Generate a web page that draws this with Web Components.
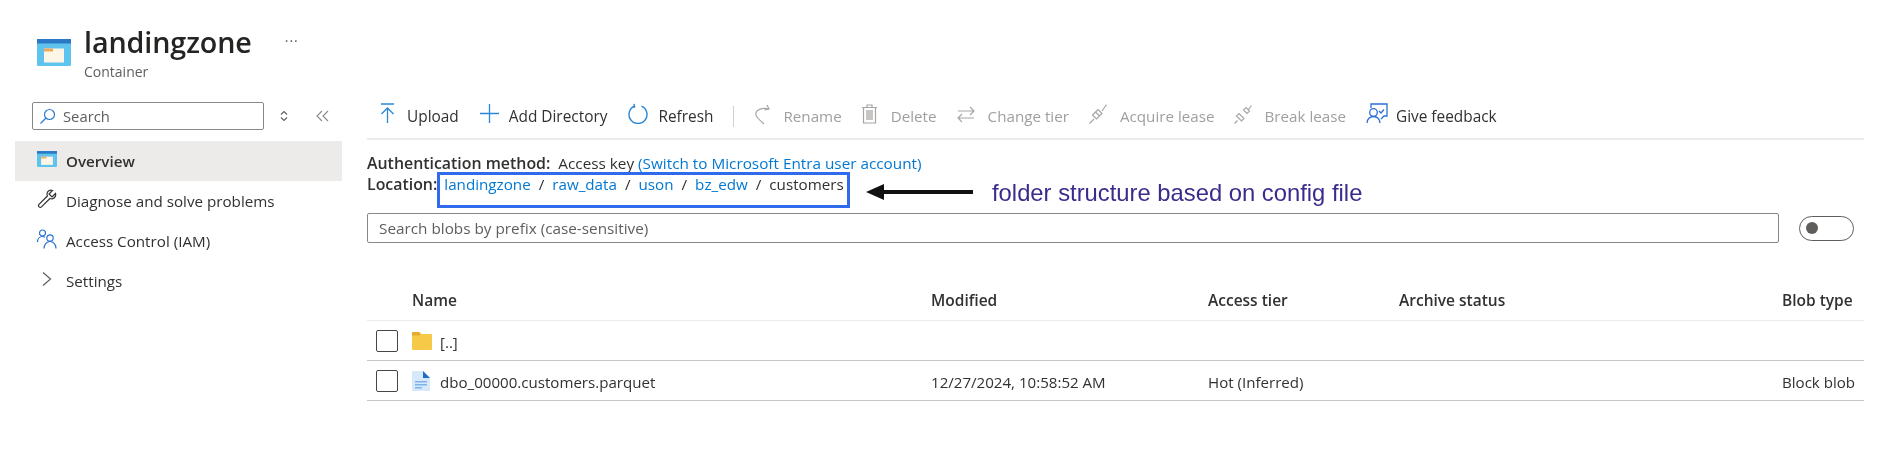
<!DOCTYPE html>
<html>
<head>
<meta charset="utf-8">
<title>landingzone</title>
<style>
  html, body { margin: 0; background: #fff; }
  body { font-family: "Open Sans", "Noto Sans", sans-serif; color: #323130; }
</style>
</head>
<body>
<blob-page></blob-page>

<script>
const ICONS = {
  container: (w, h) => `<svg width="${w}" height="${h}" viewBox="0 0 34 27"><rect x="0" y="0" width="34" height="27" rx="1.5" fill="#5ec4ee"/><rect x="0" y="0" width="34" height="4.5" fill="#2a78c6"/><rect x="7" y="9.5" width="20" height="14" fill="#fdf6e6"/><rect x="7" y="9.5" width="9" height="3" fill="#f0a95b"/></svg>`,
  search: `<svg width="17" height="17" viewBox="0 0 17 17" fill="none" stroke="#2b7cd3" stroke-width="1.2"><circle cx="10.5" cy="6.5" r="5"/><path d="M7 10 1.5 15.5"/></svg>`,
  updown: `<svg width="10" height="12" viewBox="0 0 10 12" fill="none" stroke="#605e5c" stroke-width="1.1"><path d="M2 4.500 5 1.500 8 4.500M2 7.500 5 10.500 8 7.500"/></svg>`,
  collapse: `<svg width="13" height="12" viewBox="0 0 13 12" fill="none" stroke="#8a8886" stroke-width="1.1"><path d="M6 1 1 6l5 5M12 1 7 6l5 5"/></svg>`,
  wrench: `<svg width="20" height="20" viewBox="0 0 20 20" fill="none" stroke="#323130" stroke-width="1.2"><path d="M18.5 4.5 15 8l-3-3 3.5-3.5C13 .6 10 2 10 5c0 .9.2 1.5.4 2L2 15.4c-1.6 1.7.9 4 2.5 2.500l8.400-8.400c3.300 1.300 6.600-1.500 5.600-5z"/></svg>`,
  people: `<svg width="20" height="20" viewBox="0 0 20 20" fill="none" stroke="#2b6fd6" stroke-width="1.2"><circle cx="5.500" cy="4" r="3"/><path d="M.5 13c0-3 2-5.500 5-5.500 1 0 1.800.3 2.500.7"/><circle cx="13" cy="9" r="3.200"/><path d="M7 19.500c0-3.500 2.500-7 6-7s6 3.500 6 7"/></svg>`,
  chevron: `<svg width="12" height="16" viewBox="0 0 12 16" fill="none" stroke="#605e5c" stroke-width="1.200"><path d="M2 1.500 9.500 8 2 14.500"/></svg>`,
  upload: `<svg width="15" height="21" viewBox="0 0 15 21" fill="none" stroke="#2b88d8" stroke-width="1.300"><path d="M1 1h13M7.500 20V5.500M1.500 11l6-6 6 6"/></svg>`,
  plus: `<svg width="19" height="19" viewBox="0 0 19 19" fill="none" stroke="#2b88d8" stroke-width="1.300"><path d="M9.500 0v19M0 9.500h19"/></svg>`,
  refresh: `<svg width="20" height="21" viewBox="0 0 20 21" fill="none" stroke="#2b88d8" stroke-width="1.400"><path d="M13.500 3.200a9 9 0 1 1-7 0M6 .8l.6 3.200-3.200.6"/></svg>`,
  rename: `<svg width="17" height="21" viewBox="0 0 17 21" fill="none" stroke="#a8a6a4" stroke-width="1.200"><path d="M13 1l2 4-4.500 1M15 5C8 3 1 6 2 11c.5 3 4 5 8 9"/></svg>`,
  trash: `<svg width="15" height="20" viewBox="0 0 15 20" fill="none" stroke="#a8a6a4" stroke-width="1.200"><path d="M0 3.500h15M5 3.500V1h5v2.500M1.500 3.500V19h12V3.500"/><rect x="4" y="6" width="7" height="10" fill="#c8c6c4" stroke="none"/></svg>`,
  swap: `<svg width="18" height="17" viewBox="0 0 18 17" fill="none" stroke="#a8a6a4" stroke-width="1.200"><path d="M1 5h16M13 1l4 4-4 4M17 12H1M5 8l-4 4 4 4"/></svg>`,
  lease: `<svg width="18" height="20" viewBox="0 0 18 20" fill="none" stroke="#a8a6a4" stroke-width="1.200"><path d="M.5 19.500 5 15M13 7l4.500-6.500M3.500 11 9 5.500l4 4L7.500 15z"/><path d="M6.500 8l4 4"/></svg>`,
  breaklease: `<svg width="18" height="20" viewBox="0 0 18 20" fill="none" stroke="#a8a6a4" stroke-width="1.200"><path d="M.5 19.500 3.500 16.500M14.500 5.500l3-4M2.500 12l5 5 2.500-2.500-5-5zM9.500 6l3.500 3.500 2.500-2.500L12 3.500z"/></svg>`,
  feedback: `<svg width="22" height="21" viewBox="0 0 22 21" fill="none" stroke="#2b6fd6" stroke-width="1.300"><path d="M5 5V1h16v12h-3l-3 3"/><circle cx="7.500" cy="9.500" r="3.800"/><path d="M1 20c0-4 3-6.500 6.500-6.500S14 16 14 20M13 8l2 2 3-3.500"/></svg>`,
  folder: `<svg width="20" height="18" viewBox="0 0 20 18"><path d="M0 1.200C0 .5.500 0 1.200 0H7l2 2h10c.6 0 1 .4 1 1v14c0 .6-.4 1-1 1H1c-.6 0-1-.4-1-1z" fill="#f7c948"/><path d="M0 1.200C0 .5.500 0 1.200 0H7l2 2-2 1.500H0z" fill="#e6ac32"/></svg>`,
  file: `<svg width="18" height="20" viewBox="0 0 18 20"><path d="M0 1a1 1 0 0 1 1-1h10l7 7v12a1 1 0 0 1-1 1H1a1 1 0 0 1-1-1z" fill="#d6e8fa"/><path d="M11 0l7 7h-7z" fill="#1f6fc4"/><rect x="3" y="10" width="12" height="1.500" fill="#7fb2e8"/><rect x="3" y="13" width="12" height="1.500" fill="#7fb2e8"/><rect x="3" y="16" width="7" height="1.500" fill="#7fb2e8"/></svg>`
};

class PageHeader extends HTMLElement {
  constructor() {
    super();
    this.attachShadow({ mode: 'open' });
    this.shadowRoot.innerHTML = `
      <style>
        :host { display: flex; align-items: flex-start; height: 94px; padding-left: 37px; box-sizing: border-box; padding-top: 21px; }
        .icon { margin-top: 18px; margin-right: 13px; display: flex; }
        .name { font-size: 28.700px; font-weight: 600; line-height: 42px; color: #252423; letter-spacing: -.1px; }
        .sub { font-size: 14px; line-height: 18px; color: #605e5c; }
        .more { margin-left: 33px; margin-top: 13px; font-size: 14px; line-height: 14px; color: #605e5c; letter-spacing: 1px; }
      </style>
      <div class="icon">${ICONS.container(34, 27)}</div>
      <div><div class="name">${this.getAttribute('name')}</div><div class="sub">${this.getAttribute('kind')}</div></div>
      <div class="more">···</div>
    `;
  }
}
customElements.define('page-header', PageHeader);

class SideItem extends HTMLElement {
  constructor() {
    super();
    this.attachShadow({ mode: 'open' });
    this.shadowRoot.innerHTML = `
      <style>
        :host { display: flex; align-items: center; height: 40px; padding-left: 22px; font-size: 15.200px; color: #323130; }
        :host([active]) { background: #edebe9; font-weight: 600; }
        .icon { width: 20px; margin-right: 9px; display: flex; justify-content: center; }
      </style>
      <div class="icon"><slot name="icon"></slot></div><slot></slot>
    `;
  }
}
customElements.define('side-item', SideItem);

class SideNav extends HTMLElement {
  constructor() {
    super();
    this.attachShadow({ mode: 'open' });
    this.shadowRoot.innerHTML = `
      <style>
        :host { display: block; width: 327px; margin-left: 15px; padding-top: 8px; flex: none; }
        .top { display: flex; align-items: center; margin: 0 0 11px 17px; }
        .box { width: 232px; height: 28px; box-sizing: border-box; border: 1px solid #8a8886; border-radius: 2px; display: flex; align-items: center; padding-left: 6px; gap: 7px; font-size: 14.800px; color: #605e5c; }
        .ud { margin-left: 15px; display: flex; }
        .col { margin-left: 27px; display: flex; }
      </style>
      <div class="top">
        <div class="box">${ICONS.search}<span>Search</span></div>
        <div class="ud">${ICONS.updown}</div>
        <div class="col">${ICONS.collapse}</div>
      </div>
      <slot></slot>
    `;
  }
}
customElements.define('side-nav', SideNav);

class ToolButton extends HTMLElement {
  constructor() {
    super();
    this.attachShadow({ mode: 'open' });
    this.shadowRoot.innerHTML = `
      <style>
        :host { display: flex; align-items: center; font-size: 15.400px; color: #323130; white-space: nowrap; }
        :host([disabled]) { color: #a19f9d; font-size: 15.200px; }
        .icon { display: flex; margin-right: var(--icon-gap, 12px); }
      </style>
      <div class="icon"><slot name="icon"></slot></div><slot></slot>
    `;
  }
}
customElements.define('tool-button', ToolButton);

class CommandBar extends HTMLElement {
  constructor() {
    super();
    this.attachShadow({ mode: 'open' });
    this.shadowRoot.innerHTML = `
      <style>
        :host { display: flex; align-items: center; height: 46px; box-sizing: border-box; border-bottom: 2px solid #edebe9; padding-left: 13px; gap: 20px; }
        ::slotted(.wide) { margin-left: 1px; }
      </style>
      <slot></slot>
    `;
  }
}
customElements.define('command-bar', CommandBar);

class BlobPath extends HTMLElement {
  constructor() {
    super();
    this.attachShadow({ mode: 'open' });
    const crumbs = ['landingzone', 'raw_data', 'uson', 'bz_edw'];
    this.shadowRoot.innerHTML = `
      <style>
        :host { display: block; position: relative; font-size: 15.300px; line-height: 21px; padding-top: 13px; color: #323130; }
        b { font-weight: 600; font-size: 15.900px; }
        a { color: #0078d4; text-decoration: none; }
        .auth { white-space: nowrap; }
        .auth span { margin-left: 4px; }
        .loc { display: flex; white-space: nowrap; }
        .crumbs { display: flex; margin-left: 7px; gap: 8px; font-size: 15.200px; }
        .mark { position: absolute; left: 70px; top: 32px; width: 413px; height: 36px; box-sizing: border-box; border: 3px solid #2f6bea; }
        .arrow { position: absolute; left: 499px; top: 43px; }
        .note { position: absolute; left: 625px; top: 40px; font-family: "Liberation Sans", Arial, sans-serif; font-size: 23.800px; line-height: 26px; color: #3a2b8c; white-space: nowrap; }
      </style>
      <div class="auth"><b>Authentication method:</b> <span>Access key</span> <a href="#">(Switch to Microsoft Entra user account)</a></div>
      <div class="loc"><b>Location:</b><div class="crumbs">
        ${crumbs.map(c => `<a href="#">${c}</a><span>/</span>`).join('')}<span>customers</span>
      </div></div>
      <div class="mark"></div>
      <svg class="arrow" width="108" height="18" viewBox="0 0 108 18"><path d="M0 9 18 1v6h89v4H18v6z" fill="#111"/></svg>
      <div class="note">folder structure based on config file</div>
    `;
  }
}
customElements.define('blob-path', BlobPath);

class PrefixSearch extends HTMLElement {
  constructor() {
    super();
    this.attachShadow({ mode: 'open' });
    this.shadowRoot.innerHTML = `
      <style>
        :host { display: flex; align-items: center; margin-top: 18px; }
        .input { width: 1412px; height: 30px; box-sizing: border-box; border: 1px solid #8a8886; border-radius: 2px; padding-left: 11px; font-size: 15.300px; line-height: 28px; color: #605e5c; }
        .toggle { margin-left: 20px; width: 55px; height: 25px; box-sizing: border-box; border: 1px solid #605e5c; border-radius: 13px; display: flex; align-items: center; padding-left: 6px; }
        .toggle i { width: 12px; height: 12px; border-radius: 50%; background: #605e5c; }
      </style>
      <div class="input">${this.getAttribute('placeholder')}</div>
      <div class="toggle"><i></i></div>
    `;
  }
}
customElements.define('prefix-search', PrefixSearch);

class BlobRow extends HTMLElement {
  constructor() {
    super();
    this.attachShadow({ mode: 'open' });
    this.shadowRoot.innerHTML = `
      <style>
        :host { display: grid; grid-template-columns: 45px 519px 277px 191px 383px 82px; align-items: center; height: 40px; box-sizing: border-box; border-bottom: 1px solid #c8c6c4; font-size: 15.100px; color: #323130; white-space: nowrap; }
        :host([head]) { font-size: 15.500px; font-weight: 600; border-bottom-color: #edebe9; height: 39px; padding-bottom: 2px; }
        :host(:not([head])) .cell { padding-top: 2px; }
        .check { width: 22px; height: 22px; box-sizing: border-box; border: 1.500px solid #484644; border-radius: 2px; margin-left: 9px; }
        .name { display: flex; align-items: center; }
        .icon { width: 28px; display: flex; }
      </style>
      <div>${this.hasAttribute('head') ? '' : '<div class="check"></div>'}</div>
      <div class="name">${ICONS[this.getAttribute('icon')] ? `<div class="icon">${ICONS[this.getAttribute('icon')]}</div>` : ''}<div class="cell"><slot name="name"></slot></div></div>
      <div class="cell"><slot name="modified"></slot></div>
      <div class="cell"><slot name="tier"></slot></div>
      <div class="cell"><slot name="archive"></slot></div>
      <div class="cell"><slot name="type"></slot></div>
    `;
  }
}
customElements.define('blob-row', BlobRow);

class BlobPage extends HTMLElement {
  constructor() {
    super();
    this.attachShadow({ mode: 'open' });
    this.shadowRoot.innerHTML = `
      <style>
        :host { display: block; width: 1890px; height: 454px; overflow: hidden; filter: blur(.35px); }
        .body { display: flex; }
        main { margin-left: 25px; width: 1497px; }
        .sep { width: 1px; height: 21px; background: #d2d0ce; }
        .table { margin-top: 39px; }
      </style>
      <page-header name="landingzone" kind="Container"></page-header>
      <div class="body">
        <side-nav>
          <side-item active><span slot="icon">${ICONS.container(20, 16)}</span>Overview</side-item>
          <side-item><span slot="icon">${ICONS.wrench}</span>Diagnose and solve problems</side-item>
          <side-item><span slot="icon">${ICONS.people}</span>Access Control (IAM)</side-item>
          <side-item><span slot="icon">${ICONS.chevron}</span>Settings</side-item>
        </side-nav>
        <main>
          <command-bar>
            <tool-button><span slot="icon">${ICONS.upload}</span>Upload</tool-button>
            <tool-button class="wide" style="--icon-gap:10px"><span slot="icon">${ICONS.plus}</span>Add Directory</tool-button>
            <tool-button class="wide" style="--icon-gap:10px"><span slot="icon">${ICONS.refresh}</span>Refresh</tool-button>
            <div class="sep"></div>
            <tool-button disabled><span slot="icon">${ICONS.rename}</span>Rename</tool-button>
            <tool-button disabled style="--icon-gap:14px"><span slot="icon">${ICONS.trash}</span>Delete</tool-button>
            <tool-button disabled style="--icon-gap:13px"><span slot="icon">${ICONS.swap}</span>Change tier</tool-button>
            <tool-button disabled style="--icon-gap:13px"><span slot="icon">${ICONS.lease}</span>Acquire lease</tool-button>
            <tool-button disabled><span slot="icon">${ICONS.breaklease}</span>Break lease</tool-button>
            <tool-button style="--icon-gap:8px"><span slot="icon">${ICONS.feedback}</span>Give feedback</tool-button>
          </command-bar>
          <blob-path></blob-path>
          <prefix-search placeholder="Search blobs by prefix (case-sensitive)"></prefix-search>
          <div class="table">
            <blob-row head>
              <span slot="name">Name</span><span slot="modified">Modified</span><span slot="tier">Access tier</span><span slot="archive">Archive status</span><span slot="type">Blob type</span>
            </blob-row>
            <blob-row icon="folder"><span slot="name">[..]</span></blob-row>
            <blob-row icon="file">
              <span slot="name">dbo_00000.customers.parquet</span><span slot="modified">12/27/2024, 10:58:52 AM</span><span slot="tier">Hot (Inferred)</span><span slot="type">Block blob</span>
            </blob-row>
          </div>
        </main>
      </div>
    `;
  }
}
customElements.define('blob-page', BlobPage);
</script>
</body>
</html>
